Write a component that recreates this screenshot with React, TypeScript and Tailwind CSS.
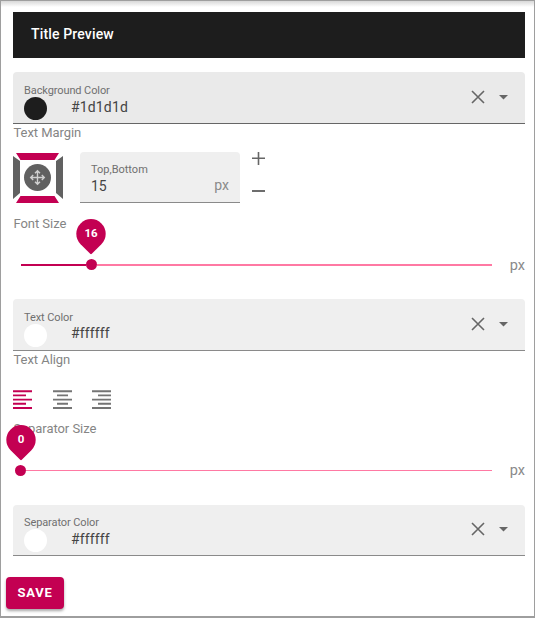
import React from "react";

function ClearIcon() {
  return (
    <svg className="h-[14px] w-[14px]" viewBox="0 0 14 14" fill="none" stroke="#666" strokeWidth="1.6">
      <path d="M1 1L13 13M13 1L1 13" />
    </svg>
  );
}

function ColorField({
  label,
  value,
  swatch,
  className,
  textClass,
  valueClass,
  iconClass,
}: {
  label: string;
  value: string;
  swatch: string;
  className: string;
  textClass: string;
  valueClass: string;
  iconClass: string;
}) {
  return (
    <div className={`flex items-start rounded-t-[4px] border-b pl-[11px] ${className}`}>
      <div className={`flex-1 ${textClass}`}>
        <div className="h-[13px] text-[11px] leading-[14px] tracking-[-0.1px] text-[#707070]">{label}</div>
        <div className="flex items-start">
          <div className={`h-[23px] w-[23px] rounded-full ${swatch}`} />
          <div className={`ml-[24px] text-[14px] leading-[20px] text-[#444] ${valueClass}`}>{value}</div>
        </div>
      </div>
      <div className={`flex items-center gap-[14px] pr-[17px] ${iconClass}`}>
        <button aria-label="Clear">
          <ClearIcon />
        </button>
        <button aria-label="Open">
          <svg className="h-[5px] w-[9px]" viewBox="0 0 9 5" fill="#666">
            <path d="M0 0H9L4.5 4.5Z" />
          </svg>
        </button>
      </div>
    </div>
  );
}

function Thumb({ value, bubbleClass }: { value: string; bubbleClass: string }) {
  return (
    <div className="relative h-[11px] w-[11px] shrink-0 rounded-full bg-[#c30052]">
      <div className={`absolute -top-[40px] h-[36px] w-[30px] ${bubbleClass}`}>
        <svg className="h-[36px] w-[30px]" viewBox="0 0 30 36" fill="#c30052">
          <path d="M4.6 25.2A14.7 14.7 0 1 1 25.4 25.2L15.8 34.8Q15 35.6 14.2 34.8Z" />
        </svg>
        <span className="absolute inset-x-0 top-[6px] text-center text-[11.5px] font-bold leading-[16px] text-white">
          {value}
        </span>
      </div>
    </div>
  );
}

function AlignIcon({ lines, color }: { lines: string; color: string }) {
  return (
    <svg className={`h-[20px] w-[19px] ${color}`} viewBox="0 0 19 20" fill="none" stroke="currentColor" strokeWidth="1.9">
      <path d={lines} />
    </svg>
  );
}

function Label({ children }: { children: React.ReactNode }) {
  return <div className="pl-[0.5px] text-[13px] leading-[18px] tracking-[-0.05px] text-[#858585]">{children}</div>;
}

export default function App() {
  return (
    <main className="flex h-[618px] w-[535px] flex-col overflow-hidden border border-b-2 border-[#9e9e9e] bg-white font-[Roboto,sans-serif]">
      <div className="h-[6px] shrink-0 bg-linear-to-b from-[#d8d8d8] to-white" />
      <div className="flex flex-1 flex-col pt-[5px] pr-[9px] pl-[12px]">
        <header className="flex h-[46px] shrink-0 items-center bg-[#1d1d1d] pb-[2px] pl-[18px] text-[14px] font-medium tracking-[0.15px] text-white">
          Title Preview
        </header>

        <ColorField
          label="Background Color"
          value="#1d1d1d"
          swatch="bg-[#1d1d1d]"
          className="mt-[14px] h-[52px] shrink-0 border-[#666] bg-[#eaeaea]"
          textClass="pt-[12px]"
          valueClass="tracking-[0.15px]"
          iconClass="pt-[18px]"
        />

        <div className="h-[29px] shrink-0">
          <Label>Text Margin</Label>
        </div>
        <div className="flex h-[50px] shrink-0">
          <svg className="h-[50px] w-[50px]" viewBox="0 0 50 50">
            <path d="M3 0H46L41.5 7H7.5Z M7.5 43H41.5L46 50H3Z" fill="#c30052" />
            <path d="M0 3L7 8V40L0 46Z M50 3L43 8V40L50 46Z" fill="#616161" />
            <circle cx="24.5" cy="24.5" r="13.5" fill="#616161" />
            <path
              d="M24.5 18V31M18 24.5H31M22 20.2L24.5 17.7L27 20.2M22 28.8L24.5 31.3L27 28.8M20.2 22L17.7 24.5L20.2 27M28.8 22L31.3 24.5L28.8 27"
              fill="none"
              stroke="#d0d0d0"
              strokeWidth="1.4"
            />
          </svg>
          <div className="ml-[17px] -mt-px flex h-[51px] w-[160px] rounded-t-[4px] border-b border-[#8a8a8a] bg-[#efefef] pr-[11px] pl-[11px]">
            <div className="flex-1 pt-[11px]">
              <div className="text-[11px] leading-[14px] text-[#707070]">Top,Bottom</div>
              <div className="-mt-px text-[14px] leading-[20px] text-[#444]">15</div>
            </div>
            <div className="pt-[23px] text-[14px] leading-[20px] text-[#8a8a8a]">px</div>
          </div>
          <div className="ml-[12px] flex flex-col">
            <svg className="-mt-px h-[13px] w-[13px]" viewBox="0 0 13 13" stroke="#666" strokeWidth="1.6">
              <path d="M0 6.2H13M6.5 0V13" />
            </svg>
            <svg className="mt-[20px] h-[13px] w-[13px]" viewBox="0 0 13 13" stroke="#666" strokeWidth="1.9">
              <path d="M0 6H13" />
            </svg>
          </div>
        </div>

        <section className="h-[96px] shrink-0 pt-[12px]">
          <Label>Font Size</Label>
          <div className="mt-[22px] flex h-[20px] items-center pl-[8px]">
            <div className="h-[2px] w-[65px] bg-[#c30052]" />
            <div className="-mt-px">
              <Thumb value="16" bubbleClass="-left-[10px]" />
            </div>
            <div className="h-[2px] flex-1 bg-[#ff79a3]" />
            <span className="w-[33px] pt-px text-right text-[14.5px] leading-[20px] text-[#8a8a8a]">px</span>
          </div>
        </section>

        <ColorField
          label="Text Color"
          value="#ffffff"
          swatch="bg-white"
          className="h-[52px] shrink-0 border-[#8a8a8a] bg-[#efefef]"
          textClass="pt-[12px]"
          valueClass="-mt-px tracking-[0.15px]"
          iconClass="pt-[18px]"
        />
        <section className="h-[69px] shrink-0">
          <Label>Text Align</Label>
          <div className="mt-[20px] flex gap-[20.5px]">
            <AlignIcon color="text-[#c30052]" lines="M0 2.2H19M0 6.4H13M0 10.6H19M0 14.8H13M0 19H19" />
            <AlignIcon color="text-[#757575]" lines="M0 2.2H19M4 6.4H15M0 10.6H19M4 14.8H15M0 19H19" />
            <AlignIcon color="text-[#757575]" lines="M0 2.2H19M6 6.4H19M0 10.6H19M6 14.8H19M0 19H19" />
          </div>
        </section>

        <section className="h-[85px] shrink-0">
          <Label>Separator Size</Label>
          <div className="mt-[22px] flex h-[21px] items-center pl-[2px]">
            <Thumb value="0" bubbleClass="-left-[9px]" />
            <div className="h-px flex-1 bg-[#ff79a3]" />
            <span className="w-[33px] pt-px text-right text-[14.5px] leading-[20px] text-[#8a8a8a]">px</span>
          </div>
        </section>

        <ColorField
          label="Separator Color"
          value="#ffffff"
          swatch="bg-white"
          className="h-[51px] shrink-0 border-[#8a8a8a] bg-[#efefef]"
          textClass="pt-[11px]"
          valueClass="tracking-[0.15px]"
          iconClass="pt-[17px]"
        />

        <button className="mt-[21px] -ml-[7px] h-[32px] w-[58px] shrink-0 rounded-[4px] bg-[#c30052] text-[13px] font-bold tracking-[0.8px] text-white shadow-[0_2px_3px_rgba(0,0,0,0.35)]">
          SAVE
        </button>
      </div>
    </main>
  );
}
